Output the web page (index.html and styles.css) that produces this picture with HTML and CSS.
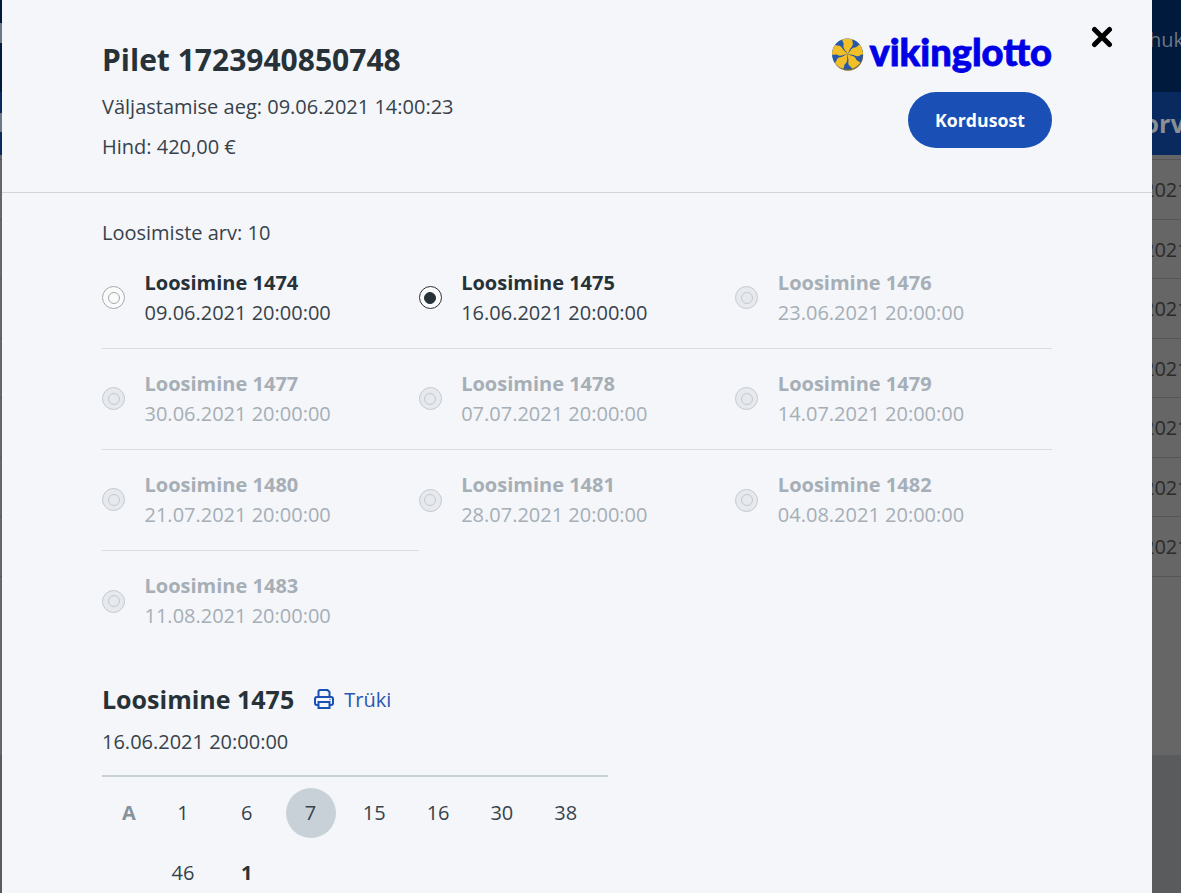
FILE: index.html
```html
<!DOCTYPE html>
<html lang="et">
<head>
<meta charset="utf-8">
<title>Pilet 1723940850748</title>
<link rel="stylesheet" href="styles.css">
</head>
<body>
<div class="backdrop">
  <div class="bg-top"><span>huk</span></div>
  <div class="bg-nav"><span>Korv</span></div>
  <div class="bg-table">
    <div class="bg-row"></div>
    <div class="bg-row">2021</div>
    <div class="bg-row">2021</div>
    <div class="bg-row">2021</div>
    <div class="bg-row">2021</div>
    <div class="bg-row">2021</div>
    <div class="bg-row">2021</div>
    <div class="bg-row">2021</div>
  </div>
  <div class="bg-foot"></div>
</div>
<main class="modal">
  <button class="close" aria-label="Sulge">
    <svg width="22" height="22" viewBox="0 0 22 22"><path d="M3.500 3.500 18.500 18.500M18.500 3.500 3.500 18.500" fill="none" stroke="#000" stroke-width="5" stroke-linecap="round"/></svg>
  </button>
  <header class="head">
    <div>
      <h1 class="title">Pilet 1723940850748</h1>
      <p class="meta">Väljastamise aeg: 09.06.2021 14:00:23</p>
      <p class="meta">Hind: 420,00 €</p>
    </div>
    <div class="head-right">
      <div class="logo">
        <svg class="wheel" width="33" height="33" viewBox="0 0 33 33">
          <circle cx="17" cy="17.500" r="15.200" fill="#8d6d24"/>
          <circle cx="16.500" cy="16" r="15.500" fill="#2558a8"/>
          <g fill="#f2bf27" transform="translate(16.500 16)">
            <path id="blade" d="M0 0C-2 -4 -5 -6 -4 -9C-3 -11 -6 -13 -5 -14.700C-2 -15.600 2 -15.600 5 -14.700C4 -12 7 -10 4 -7C2 -5 2 -3 0 0Z"/>
            <use href="#blade" transform="rotate(72)"/>
            <use href="#blade" transform="rotate(144)"/>
            <use href="#blade" transform="rotate(216)"/>
            <use href="#blade" transform="rotate(288)"/>
          </g>
        </svg>
        <span class="logo-text">vikinglotto</span>
      </div>
      <button class="repeat">Kordusost</button>
    </div>
  </header>
  <section class="body">
    <p class="count">Loosimiste arv: 10</p>
    <div class="draws">
      <label class="draw"><span class="radio"></span><span><b>Loosimine 1474</b><br>09.06.2021 20:00:00</span></label>
      <label class="draw"><span class="radio on"></span><span><b>Loosimine 1475</b><br>16.06.2021 20:00:00</span></label>
      <label class="draw off"><span class="radio"></span><span><b>Loosimine 1476</b><br>23.06.2021 20:00:00</span></label>
      <label class="draw off"><span class="radio"></span><span><b>Loosimine 1477</b><br>30.06.2021 20:00:00</span></label>
      <label class="draw off"><span class="radio"></span><span><b>Loosimine 1478</b><br>07.07.2021 20:00:00</span></label>
      <label class="draw off"><span class="radio"></span><span><b>Loosimine 1479</b><br>14.07.2021 20:00:00</span></label>
      <label class="draw off"><span class="radio"></span><span><b>Loosimine 1480</b><br>21.07.2021 20:00:00</span></label>
      <label class="draw off last"><span class="radio"></span><span><b>Loosimine 1481</b><br>28.07.2021 20:00:00</span></label>
      <label class="draw off last"><span class="radio"></span><span><b>Loosimine 1482</b><br>04.08.2021 20:00:00</span></label>
      <label class="draw off last"><span class="radio"></span><span><b>Loosimine 1483</b><br>11.08.2021 20:00:00</span></label>
    </div>
    <div class="detail-head">
      <h2 class="detail-title">Loosimine 1475</h2>
      <a class="print">
        <svg width="20" height="20" viewBox="0 0 20 20" fill="none" stroke="#1a4fb5" stroke-width="2"><path d="M4.500 8V2.500A1.500 1.500 0 0 1 6 1H13.500L15.500 3V8"/><rect x="1" y="8" width="18" height="8" rx="2"/><path d="M4.500 13H15.500V19H4.500Z" fill="#f4f6fa"/><path d="M15.500 10.500H16.500" stroke-width="1.500"/></svg>
        Trüki
      </a>
    </div>
    <p class="detail-date">16.06.2021 20:00:00</p>
    <div class="numbers">
      <span class="letter">A</span>
      <span>1</span><span>6</span><span class="hit">7</span><span>15</span><span>16</span><span>30</span><span>38</span>
      <span class="gap"></span><span>46</span><span class="extra">1</span>
    </div>
  </section>
</main>
</body>
</html>
```
FILE: styles.css
```css
* { box-sizing: border-box; }
html, body { margin: 0; height: 893px; overflow: hidden; }
body { font-family: "Open Sans", "Noto Sans", sans-serif; color: #37424a; background: #5f5f60; position: relative; }
p, h1, h2 { margin: 0; }

.backdrop { height: 893px; overflow: hidden; white-space: nowrap; font-size: 20px; color: #2b2b2b; }
.bg-top { position: relative; height: 92px; background: #001a3e; color: #6e7785; display: flex; justify-content: flex-end; align-items: center; padding-bottom: 14px; overflow: hidden; }
.bg-top span { margin-right: -3px; }
.bg-top::before { content: ""; position: absolute; left: 0; top: 23px; width: 2px; height: 20px; background: #6e7785; }
.bg-nav { position: relative; height: 63px; background: #082a5e; color: #8b8f95; font-weight: 700; font-size: 25px; padding-left: 1127px; line-height: 62px; }
.bg-nav::before { content: ""; position: absolute; left: 0; top: 21px; width: 2px; height: 19px; background: #6e7785; }
.bg-table { background: #666666; height: 600px; padding-top: 4px; }
.bg-row { height: 59.500px; border-bottom: 1px solid #565656; padding-left: 1143px; line-height: 60px; }
.bg-row:first-child { height: 0; }
.bg-foot { height: 138px; background: #5a5b5d; }

.modal { position: absolute; left: 2px; top: 0; width: 1150px; height: 893px; background: #f4f6fa; overflow: hidden; }
.close { position: absolute; left: 1089px; top: 26px; width: 22px; height: 22px; padding: 0; border: 0; background: none; }
.close svg { display: block; }

.head { height: 193px; padding: 40px 100px 0; border-bottom: 1px solid #d2d5da; display: flex; justify-content: space-between; }
.title { font-size: 30px; line-height: 40px; font-weight: 700; margin-bottom: 7px; color: #263238; }
.meta { font-size: 20px; line-height: 40px; }
.head-right { display: flex; flex-direction: column; align-items: flex-end; margin-top: -4px; }
.logo { display: flex; align-items: center; gap: 5px; height: 36px; margin-bottom: 20px; }
.wheel { display: block; flex: none; }
.logo-text { font-family: "Lato", sans-serif; font-weight: 900; font-size: 38px; line-height: 36px; margin-bottom: 6px; color: #0000e6; -webkit-text-stroke: 0.8px #0000e6; }
.repeat { width: 144px; height: 56px; border: 0; border-radius: 28px; background: #1a4fb5; color: #fff; font: 700 17.700px "Open Sans", sans-serif; }

.body { padding: 25px 100px 0; }
.count { font-size: 20px; line-height: 30px; }
.draws { display: grid; grid-template-columns: repeat(3, 1fr); }
.draw { display: flex; align-items: center; gap: 19.500px; height: 101px; padding-bottom: 1px; border-bottom: 1px solid #d9dce1; font-size: 20px; line-height: 30px; }
.draw b { font-weight: 700; color: #263238; }
.draw.last { border-bottom: 0; }
.draw.off, .draw.off b { color: #a6aeb6; }
.radio { width: 23px; height: 23px; flex: none; border-radius: 50%; border: 1px solid #a3a9ae; background: #fbfbfc; display: flex; align-items: center; justify-content: center; }
.radio::after { content: ""; width: 10px; height: 10px; border-radius: 50%; border: 1px solid #a3a9ae; }
.radio.on { border: 1.500px solid #263238; }
.radio.on::after { background: #263238; border-color: #263238; }
.off .radio { background: #e6e9ed; border-color: #c5cad0; }
.off .radio::after { border-color: #c5cad0; }

.detail-head { display: flex; align-items: center; gap: 20px; height: 40px; margin-top: 27px; }
.detail-title { font-size: 25px; line-height: 40px; font-weight: 700; color: #263238; }
.print { display: flex; align-items: center; gap: 10px; color: #2a55b0; font-size: 20px; }
.print svg { display: block; }
.detail-date { font-size: 20px; line-height: 30px; margin-top: 8px; }

.numbers { width: 506px; margin-top: 18px; padding: 6px 0 0 5px; border-top: 2px solid #c9d1d8; display: grid; grid-template-columns: 44px repeat(7, 63.800px); grid-auto-rows: 60px; font-size: 20px; }
.numbers span { display: flex; align-items: center; justify-content: center; padding-bottom: 2px; color: #37424a; }
.numbers .letter { font-weight: 700; color: #87929b; }
.hit { position: relative; z-index: 0; }
.hit::before { content: ""; position: absolute; z-index: -1; left: 7px; top: 5px; width: 50px; height: 50px; border-radius: 50%; background: #c9d1d8; }
.numbers .extra { font-weight: 700; color: #263238; }
```
